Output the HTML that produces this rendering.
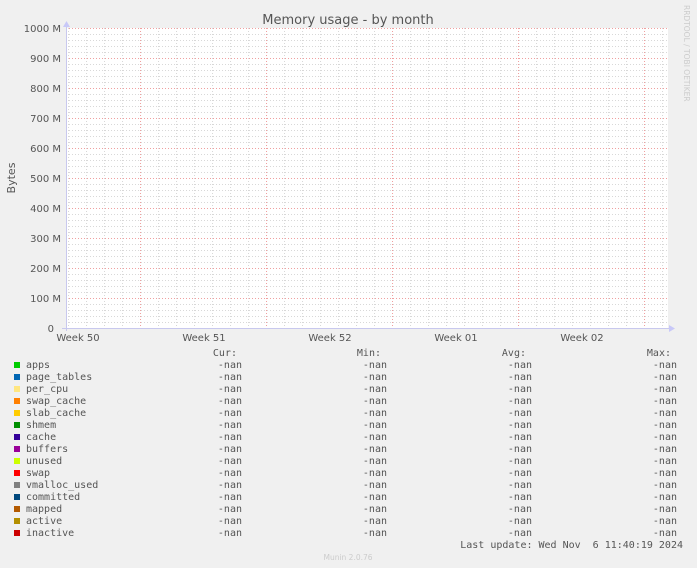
<!DOCTYPE html>
<html><head><meta charset="utf-8"><style>
html,body{margin:0;padding:0;background:#f0f0f0;}
svg{display:block;}
text{font-family:"DejaVu Sans","Liberation Sans",sans-serif;fill:#555;}
.m{font-family:"DejaVu Sans Mono","Liberation Mono",monospace;font-size:10px;fill:#555;}
</style></head><body>
<svg width="697" height="568" xmlns="http://www.w3.org/2000/svg">
<defs>
<pattern id="hm" x="66" y="28" width="3" height="6" patternUnits="userSpaceOnUse"><rect width="1" height="1" fill="#d8d8d8"/></pattern>
<pattern id="vm" x="68" y="28" width="18" height="3" patternUnits="userSpaceOnUse"><rect width="1" height="1" fill="#d8d8d8"/></pattern>
<pattern id="hM" x="66" y="28" width="3" height="30" patternUnits="userSpaceOnUse"><rect width="1" height="1" fill="#f0a0a0"/></pattern>
<pattern id="vM" x="140" y="28" width="126" height="3" patternUnits="userSpaceOnUse"><rect width="1" height="1" fill="#f0a0a0"/></pattern>
</defs>
<rect x="66" y="28" width="602" height="300" fill="#fff"/>
<rect x="66" y="28" width="602" height="300" fill="url(#hm)"/>
<rect x="66" y="28" width="602" height="300" fill="url(#vm)"/>
<rect x="66" y="28" width="602" height="300" fill="url(#hM)"/>
<rect x="66" y="28" width="602" height="300" fill="url(#vM)"/>
<line x1="66.5" y1="24" x2="66.5" y2="331" stroke="#c8c8ee"/>
<line x1="62" y1="328.5" x2="672" y2="328.5" stroke="#c8c8ee"/>
<polygon points="63,27 70,27 66.5,21" fill="#c8c8f8"/>
<polygon points="669,325 669,332 675,328.5" fill="#c8c8f8"/>
<text x="348" y="24" text-anchor="middle" font-size="13" style="fill:#555">Memory usage - by month</text>
<text transform="translate(15,178) rotate(-90)" text-anchor="middle" font-size="11">Bytes</text>
<g font-size="10" text-anchor="end">
<text x="61" y="32">1000 M</text><text x="61" y="62">900 M</text><text x="61" y="92">800 M</text>
<text x="61" y="122">700 M</text><text x="61" y="152">600 M</text><text x="61" y="182">500 M</text>
<text x="61" y="212">400 M</text><text x="61" y="242">300 M</text><text x="61" y="272">200 M</text>
<text x="61" y="302">100 M</text><text x="54" y="332">0</text>
</g>
<g font-size="10" text-anchor="middle">
<text x="78" y="341">Week 50</text><text x="204" y="341">Week 51</text><text x="330" y="341">Week 52</text>
<text x="456" y="341">Week 01</text><text x="582" y="341">Week 02</text>
</g>
<text transform="translate(684,5) rotate(90)" font-size="7.5" style="fill:#ccc">RRDTOOL / TOBI OETIKER</text>
<g text-anchor="end">
<text class="m" x="237" y="356">Cur:</text><text class="m" x="381" y="356">Min:</text>
<text class="m" x="526" y="356">Avg:</text><text class="m" x="671" y="356">Max:</text>
</g>
<g>
<rect x="14" y="362" width="6" height="6" fill="#00cc00"/><rect x="14" y="374" width="6" height="6" fill="#0066b3"/>
<rect x="14" y="386" width="6" height="6" fill="#ffe680"/><rect x="14" y="398" width="6" height="6" fill="#ff8000"/>
<rect x="14" y="410" width="6" height="6" fill="#ffcc00"/><rect x="14" y="422" width="6" height="6" fill="#008f00"/>
<rect x="14" y="434" width="6" height="6" fill="#330099"/><rect x="14" y="446" width="6" height="6" fill="#990099"/>
<rect x="14" y="458" width="6" height="6" fill="#ccff00"/><rect x="14" y="470" width="6" height="6" fill="#ff0000"/>
<rect x="14" y="482" width="6" height="6" fill="#808080"/><rect x="14" y="494" width="6" height="6" fill="#00487d"/>
<rect x="14" y="506" width="6" height="6" fill="#b35a00"/><rect x="14" y="518" width="6" height="6" fill="#b38f00"/>
<rect x="14" y="530" width="6" height="6" fill="#cc0000"/>
</g>
<g>
<text class="m" x="26" y="368">apps</text><text class="m" x="26" y="380">page_tables</text>
<text class="m" x="26" y="392">per_cpu</text><text class="m" x="26" y="404">swap_cache</text>
<text class="m" x="26" y="416">slab_cache</text><text class="m" x="26" y="428">shmem</text>
<text class="m" x="26" y="440">cache</text><text class="m" x="26" y="452">buffers</text>
<text class="m" x="26" y="464">unused</text><text class="m" x="26" y="476">swap</text>
<text class="m" x="26" y="488">vmalloc_used</text><text class="m" x="26" y="500">committed</text>
<text class="m" x="26" y="512">mapped</text><text class="m" x="26" y="524">active</text>
<text class="m" x="26" y="536">inactive</text>
</g>
<g text-anchor="end">
<text class="m" x="242" y="368">-nan</text><text class="m" x="387" y="368">-nan</text><text class="m" x="532" y="368">-nan</text><text class="m" x="677" y="368">-nan</text>
<text class="m" x="242" y="380">-nan</text><text class="m" x="387" y="380">-nan</text><text class="m" x="532" y="380">-nan</text><text class="m" x="677" y="380">-nan</text>
<text class="m" x="242" y="392">-nan</text><text class="m" x="387" y="392">-nan</text><text class="m" x="532" y="392">-nan</text><text class="m" x="677" y="392">-nan</text>
<text class="m" x="242" y="404">-nan</text><text class="m" x="387" y="404">-nan</text><text class="m" x="532" y="404">-nan</text><text class="m" x="677" y="404">-nan</text>
<text class="m" x="242" y="416">-nan</text><text class="m" x="387" y="416">-nan</text><text class="m" x="532" y="416">-nan</text><text class="m" x="677" y="416">-nan</text>
<text class="m" x="242" y="428">-nan</text><text class="m" x="387" y="428">-nan</text><text class="m" x="532" y="428">-nan</text><text class="m" x="677" y="428">-nan</text>
<text class="m" x="242" y="440">-nan</text><text class="m" x="387" y="440">-nan</text><text class="m" x="532" y="440">-nan</text><text class="m" x="677" y="440">-nan</text>
<text class="m" x="242" y="452">-nan</text><text class="m" x="387" y="452">-nan</text><text class="m" x="532" y="452">-nan</text><text class="m" x="677" y="452">-nan</text>
<text class="m" x="242" y="464">-nan</text><text class="m" x="387" y="464">-nan</text><text class="m" x="532" y="464">-nan</text><text class="m" x="677" y="464">-nan</text>
<text class="m" x="242" y="476">-nan</text><text class="m" x="387" y="476">-nan</text><text class="m" x="532" y="476">-nan</text><text class="m" x="677" y="476">-nan</text>
<text class="m" x="242" y="488">-nan</text><text class="m" x="387" y="488">-nan</text><text class="m" x="532" y="488">-nan</text><text class="m" x="677" y="488">-nan</text>
<text class="m" x="242" y="500">-nan</text><text class="m" x="387" y="500">-nan</text><text class="m" x="532" y="500">-nan</text><text class="m" x="677" y="500">-nan</text>
<text class="m" x="242" y="512">-nan</text><text class="m" x="387" y="512">-nan</text><text class="m" x="532" y="512">-nan</text><text class="m" x="677" y="512">-nan</text>
<text class="m" x="242" y="524">-nan</text><text class="m" x="387" y="524">-nan</text><text class="m" x="532" y="524">-nan</text><text class="m" x="677" y="524">-nan</text>
<text class="m" x="242" y="536">-nan</text><text class="m" x="387" y="536">-nan</text><text class="m" x="532" y="536">-nan</text><text class="m" x="677" y="536">-nan</text>
<text class="m" x="683" y="548" xml:space="preserve">Last update: Wed Nov  6 11:40:19 2024</text>
</g>
<text x="348" y="560" text-anchor="middle" font-size="7.5" style="fill:#ccc">Munin 2.0.76</text>
</svg>
</body></html>
